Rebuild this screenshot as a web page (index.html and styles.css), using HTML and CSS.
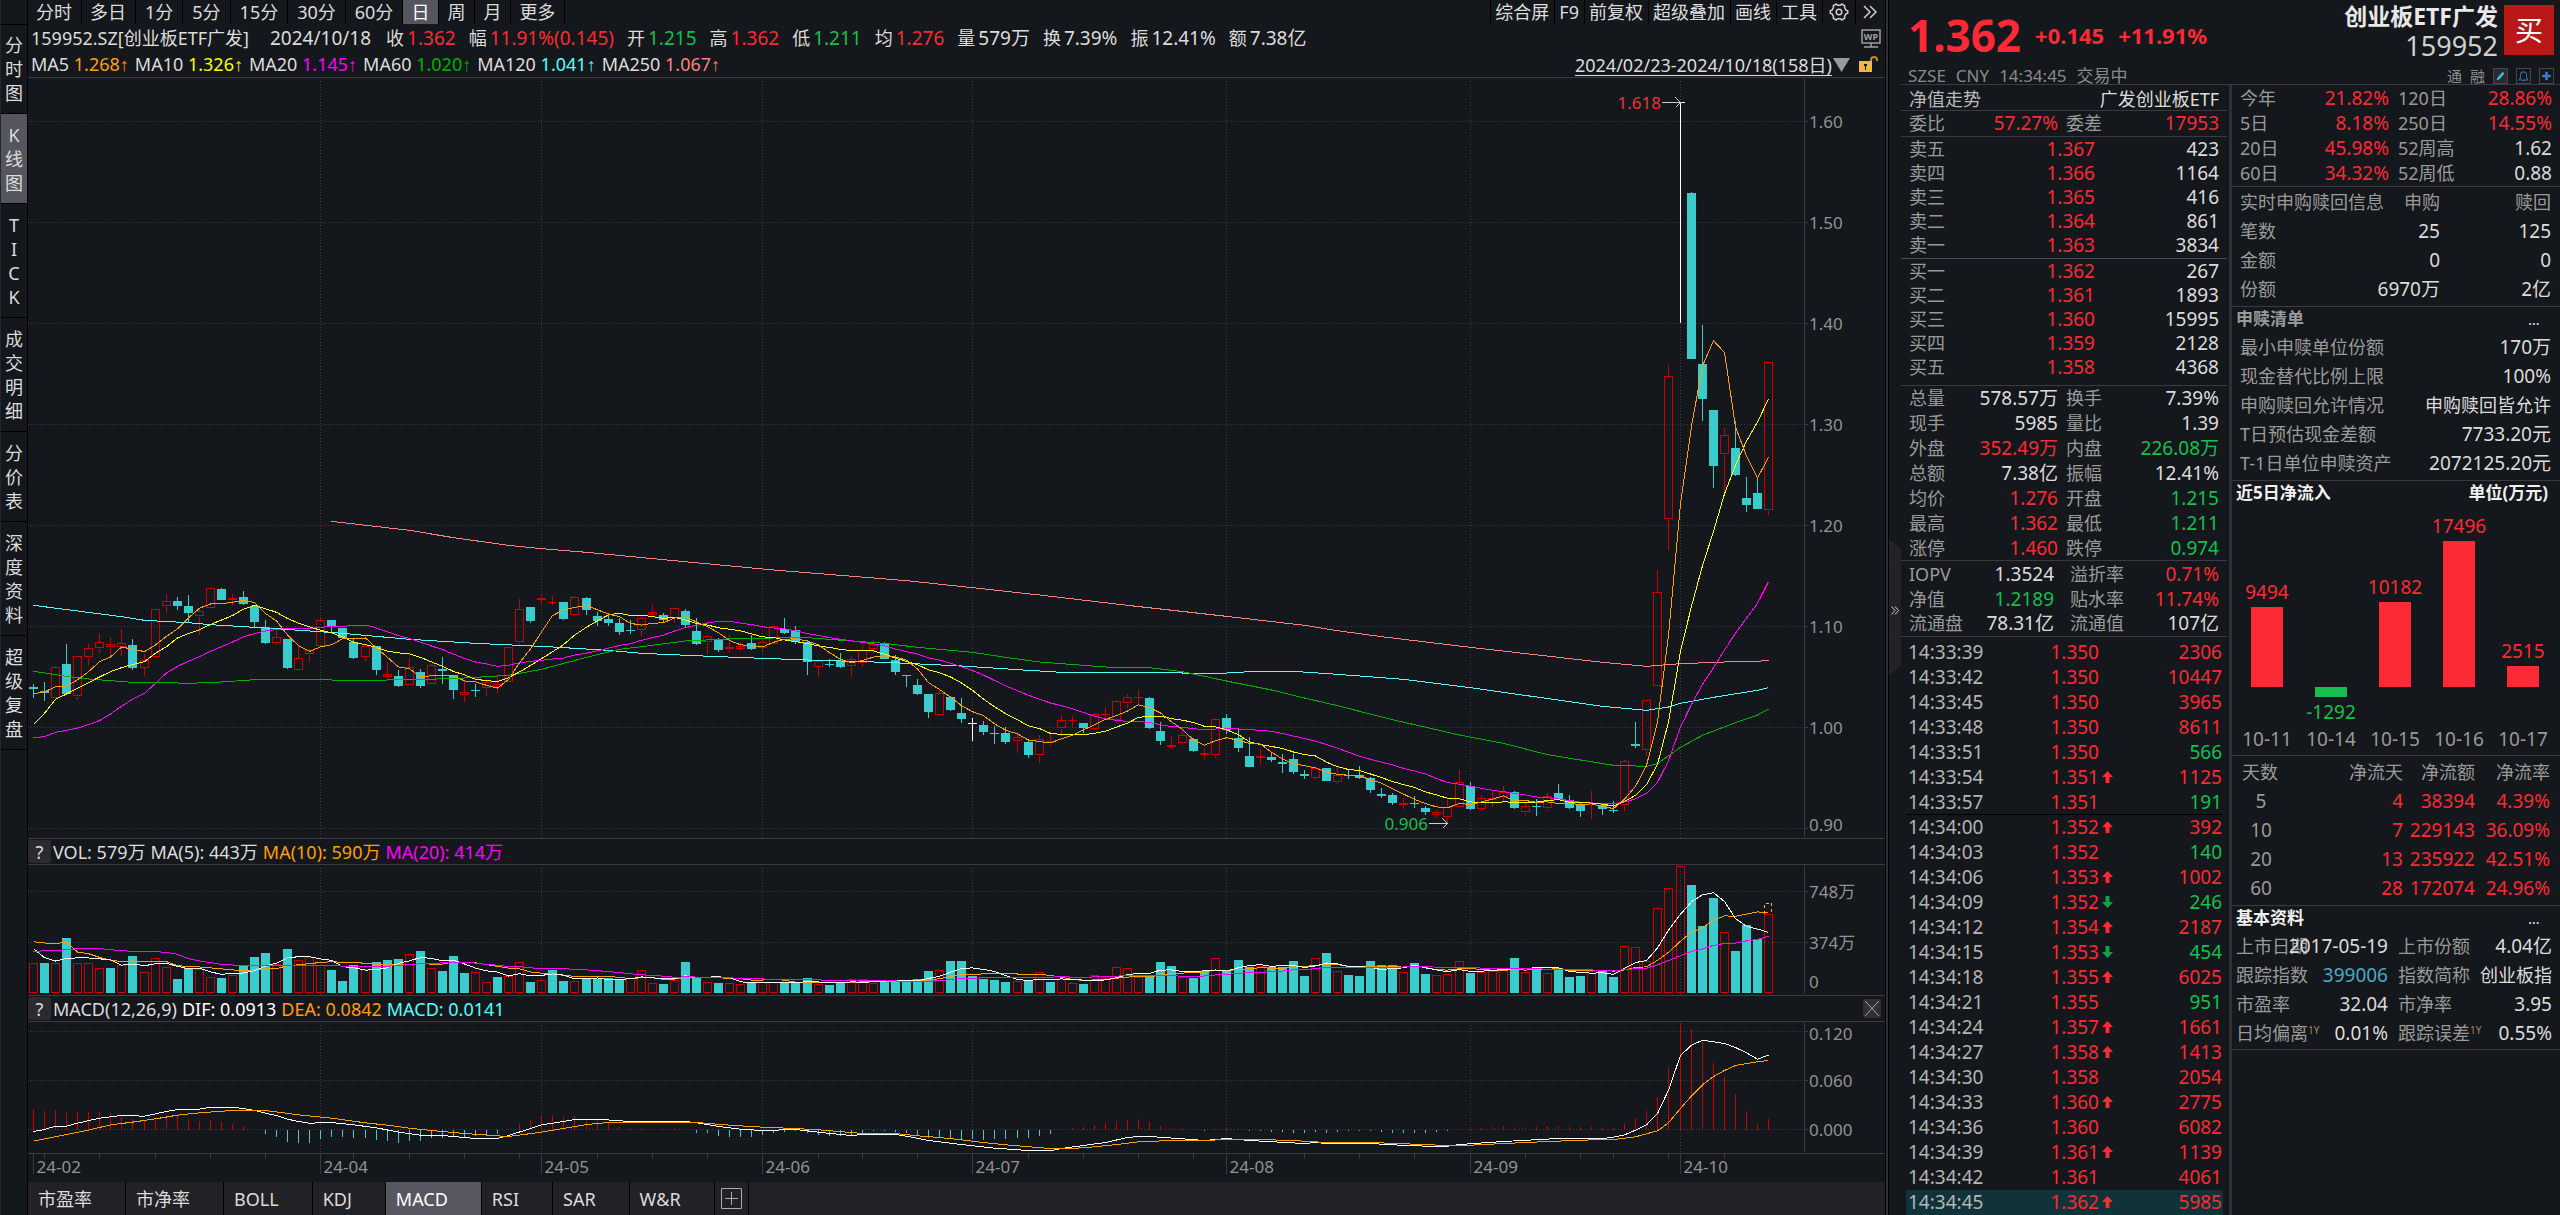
FILE: index.html
```
<!DOCTYPE html>
<html lang="zh-CN">
<head>
<meta charset="utf-8">
<title>159952.SZ 创业板ETF广发</title>
<link rel="stylesheet" href="styles.css">
</head>
<body>
<div class="app">
  <nav class="side">
    <button>分时图</button>
    <button class="on">K线图</button>
    <button>T<br>I<br>C<br>K</button>
    <button>成交明细</button>
    <button>分价表</button>
    <button>深度资料</button>
    <button>超级复盘</button>
  </nav>

  <main class="main">
    <div class="toolbar">
      <div class="periods">
        <button>分时</button><button>多日</button><button class="min">1分</button><button class="min">5分</button><button class="min">15分</button><button class="min">30分</button><button class="min">60分</button><button class="on">日</button><button>周</button><button>月</button><button>更多</button>
      </div>
      <div class="tools">
        <button>综合屏</button><button>F9</button><button>前复权</button><button>超级叠加</button><button>画线</button><button>工具</button>
        <button class="icon" aria-label="设置"><svg width="20" height="20" viewBox="0 0 20 20"><path d="M7.200 2l1.300 1.200h3L12.800 2l3 1.800-.3 1.800 1.500 2.500 1.700.7v2.400l-1.700.7-1.500 2.500.3 1.800-3 1.800-1.300-1.200h-3L7.200 18l-3-1.800.3-1.800L3 11.900l-1.700-.7V8.800L3 8.100l1.500-2.500-.3-1.800z"/><circle cx="10" cy="10" r="2.800"/></svg></button>
        <button class="icon last" aria-label="展开"><svg width="14" height="14" viewBox="0 0 14 14"><path d="M1 1l6 6-6 6M7 1l6 6-6 6"/></svg></button>
      </div>
    </div>

    <div class="info">
      <span class="name">159952.SZ[创业板ETF广发]</span>
      <span class="date">2024/10/18</span>
      <span>收<b class="up">1.362</b></span>
      <span>幅<b class="up">11.91%(0.145)</b></span>
      <span>开<b class="down">1.215</b></span>
      <span>高<b class="up">1.362</b></span>
      <span>低<b class="down">1.211</b></span>
      <span>均<b class="up">1.276</b></span>
      <span>量<b>579万</b></span>
      <span>换<b>7.39%</b></span>
      <span>振<b>12.41%</b></span>
      <span>额<b>7.38亿</b></span>
      <button class="wp" aria-label="WP"><svg width="20" height="19" viewBox="0 0 20 19"><path d="M1 1h18v13H1zM10 14v4M3 18h14" fill="none" stroke="#a0a0a0" stroke-width="1.500"/><text x="10" y="11" text-anchor="middle">WP</text></svg></button>
    </div>
    <div class="legend">
      <span>MA5 <b class="m5">1.268<i>↑</i></b></span>
      <span>MA10 <b class="m10">1.326<i>↑</i></b></span>
      <span>MA20 <b class="m20">1.145<i>↑</i></b></span>
      <span>MA60 <b class="m60">1.020<i>↑</i></b></span>
      <span>MA120 <b class="m120">1.041<i>↑</i></b></span>
      <span>MA250 <b class="m250">1.067<i>↑</i></b></span>
      <a class="range" href="#range">2024/02/23-2024/10/18(158日)</a>
      <svg class="tri" width="17" height="14" viewBox="0 0 17 14"><path d="M0 0h17L8.500 14z" fill="#9a9a9a"/></svg>
      <svg class="lock" width="20" height="17" viewBox="0 0 20 17"><path d="M0 5h13v11H0z" fill="#f2b73c"/><path d="M12 5V4c0-4 6-4 6 0v1" fill="none" stroke="#c48a22" stroke-width="2"/><path d="M5 8h3v2H7v4H6v-4H5z" fill="#14171b"/></svg>
    </div>

    <svg class="pane price" id="price"></svg>

    <div class="panehead">
      <button class="q" aria-label="成交量说明">?</button>
      <span>VOL: 579万</span><span>MA(5): 443万</span><span class="m5">MA(10): 590万</span><span class="m20">MA(20): 414万</span>
    </div>
    <svg class="pane vol" id="vol"></svg>

    <div class="panehead">
      <button class="q" aria-label="MACD说明">?</button>
      <span>MACD(12,26,9)</span><span class="w">DIF: 0.0913</span><span class="m5">DEA: 0.0842</span><span class="m120">MACD: 0.0141</span>
      <button class="close" aria-label="关闭"><svg width="18" height="19" viewBox="0 0 18 19"><path d="M2 2l14 15M16 2L2 17"/></svg></button>
    </div>
    <svg class="pane macd" id="macd"></svg>
    <svg class="dates" id="dates"></svg>

    <div class="tabs">
      <button>市盈率</button><button>市净率</button><button>BOLL</button><button>KDJ</button><button class="on">MACD</button><button>RSI</button><button>SAR</button><button>W&amp;R</button>
      <button class="add" aria-label="添加指标"><svg width="21" height="21" viewBox="0 0 21 21"><path d="M.5.5h20v20H.5zM10.500 4v13M4 10.500h13"/></svg></button>
    </div>
  </main>

  <div class="split"></div>
  <div class="fold">
    <button aria-label="收起"><svg width="8" height="9" viewBox="0 0 8 9"><path d="M.5.5l3.500 4-3.500 4M4 .5l3.500 4L4 8.500"/></svg></button>
  </div>

  <aside class="quote">
    <header class="qhead">
      <div class="last-price">
        <div class="figures"><strong class="up">1.362</strong><b class="up">+0.145</b><b class="up">+11.91%</b></div>
        <div class="venue"><span>SZSE</span><span>CNY</span><span>14:34:45</span><span>交易中</span></div>
      </div>
      <div class="ident">
        <div class="idtop">
          <div class="names"><h1>创业板ETF广发</h1><span>159952</span></div>
          <button class="buy">买</button>
        </div>
        <div class="flags">
          <span>通</span><span>融</span>
          <button class="nb" aria-label="编辑"><svg width="15" height="16" viewBox="0 0 15 16"><path d="M3 13l1-3 6-7 2 2-6 7z" fill="#35c3e0"/></svg></button>
          <button aria-label="提醒"><svg width="15" height="16" viewBox="0 0 15 16"><path d="M2.500 12.500h10L11 10V7c0-5-7-5-7 0v3zM6 13.500h3" fill="none" stroke="#3a68b0" stroke-width="1.200"/></svg></button>
          <button aria-label="加自选"><svg width="15" height="16" viewBox="0 0 15 16"><path d="M6 3h3v3.500h3.500v3H9V13H6V9.500H2.500v-3H6z" fill="#3f74c8"/></svg></button>
        </div>
      </div>
    </header>

    <div class="cols">
      <section class="left">
        <div class="fund"><span>净值走势</span><b>广发创业板ETF</b></div>
        <table class="stats"><colgroup><col class="c1"><col class="c2"><col class="c3"><col class="c4"></colgroup>
          <tr><th>委比</th><td class="up">57.27%</td><th>委差</th><td class="up">17953</td></tr>
        </table>
        <table class="book asks"><colgroup><col class="b1"><col class="b2"><col></colgroup>
          <tr><th>卖五</th><td class="up">1.367</td><td>423</td></tr>
          <tr><th>卖四</th><td class="up">1.366</td><td>1164</td></tr>
          <tr><th>卖三</th><td class="up">1.365</td><td>416</td></tr>
          <tr><th>卖二</th><td class="up">1.364</td><td>861</td></tr>
          <tr><th>卖一</th><td class="up">1.363</td><td>3834</td></tr>
        </table>
        <table class="book bids"><colgroup><col class="b1"><col class="b2"><col></colgroup>
          <tr><th>买一</th><td class="up">1.362</td><td>267</td></tr>
          <tr><th>买二</th><td class="up">1.361</td><td>1893</td></tr>
          <tr><th>买三</th><td class="up">1.360</td><td>15995</td></tr>
          <tr><th>买四</th><td class="up">1.359</td><td>2128</td></tr>
          <tr><th>买五</th><td class="up">1.358</td><td>4368</td></tr>
        </table>
        <table class="stats"><colgroup><col class="c1"><col class="c2"><col class="c3"><col class="c4"></colgroup>
          <tr><th>总量</th><td>578.57万</td><th>换手</th><td>7.39%</td></tr>
          <tr><th>现手</th><td>5985</td><th>量比</th><td>1.39</td></tr>
          <tr><th>外盘</th><td class="up">352.49万</td><th>内盘</th><td class="down">226.08万</td></tr>
          <tr><th>总额</th><td>7.38亿</td><th>振幅</th><td>12.41%</td></tr>
          <tr><th>均价</th><td class="up">1.276</td><th>开盘</th><td class="down">1.215</td></tr>
          <tr><th>最高</th><td class="up">1.362</td><th>最低</th><td class="down">1.211</td></tr>
          <tr><th>涨停</th><td class="up">1.460</td><th>跌停</th><td class="down">0.974</td></tr>
        </table>
        <table class="stats nav"><colgroup><col class="c1"><col class="c2"><col class="c3"><col class="c4"></colgroup>
          <tr><th>IOPV</th><td>1.3524</td><th>溢折率</th><td class="up">0.71%</td></tr>
          <tr><th>净值</th><td class="down">1.2189</td><th>贴水率</th><td class="up">11.74%</td></tr>
          <tr><th>流通盘</th><td>78.31亿</td><th>流通值</th><td>107亿</td></tr>
        </table>
        <table class="ticks"><colgroup><col class="t1"><col class="t2"><col class="t3"><col></colgroup>
          <tr><th>14:33:39</th><td>1.350</td><td></td><td>2306</td></tr>
          <tr><th>14:33:42</th><td>1.350</td><td></td><td>10447</td></tr>
          <tr><th>14:33:45</th><td>1.350</td><td></td><td>3965</td></tr>
          <tr><th>14:33:48</th><td>1.350</td><td></td><td>8611</td></tr>
          <tr><th>14:33:51</th><td>1.350</td><td></td><td class="down">566</td></tr>
          <tr><th>14:33:54</th><td>1.351</td><td><i class="au"></i></td><td>1125</td></tr>
          <tr class="minute"><th>14:33:57</th><td>1.351</td><td></td><td class="down">191</td></tr>
          <tr><th>14:34:00</th><td>1.352</td><td><i class="au"></i></td><td>392</td></tr>
          <tr><th>14:34:03</th><td>1.352</td><td></td><td class="down">140</td></tr>
          <tr><th>14:34:06</th><td>1.353</td><td><i class="au"></i></td><td>1002</td></tr>
          <tr><th>14:34:09</th><td>1.352</td><td><i class="ad"></i></td><td class="down">246</td></tr>
          <tr><th>14:34:12</th><td>1.354</td><td><i class="au"></i></td><td>2187</td></tr>
          <tr><th>14:34:15</th><td>1.353</td><td><i class="ad"></i></td><td class="down">454</td></tr>
          <tr><th>14:34:18</th><td>1.355</td><td><i class="au"></i></td><td>6025</td></tr>
          <tr><th>14:34:21</th><td>1.355</td><td></td><td class="down">951</td></tr>
          <tr><th>14:34:24</th><td>1.357</td><td><i class="au"></i></td><td>1661</td></tr>
          <tr><th>14:34:27</th><td>1.358</td><td><i class="au"></i></td><td>1413</td></tr>
          <tr><th>14:34:30</th><td>1.358</td><td></td><td>2054</td></tr>
          <tr><th>14:34:33</th><td>1.360</td><td><i class="au"></i></td><td>2775</td></tr>
          <tr><th>14:34:36</th><td>1.360</td><td></td><td>6082</td></tr>
          <tr><th>14:34:39</th><td>1.361</td><td><i class="au"></i></td><td>1139</td></tr>
          <tr><th>14:34:42</th><td>1.361</td><td></td><td>4061</td></tr>
          <tr class="now"><th>14:34:45</th><td>1.362</td><td><i class="au"></i></td><td>5985</td></tr>
        </table>
      </section>

      <section class="right">
        <div class="pairs perf">
          <div><span>今年</span><b class="up">21.82%</b></div><div><span>120日</span><b class="up">28.86%</b></div>
          <div><span>5日</span><b class="up">8.18%</b></div><div><span>250日</span><b class="up">14.55%</b></div>
          <div><span>20日</span><b class="up">45.98%</b></div><div><span>52周高</span><b>1.62</b></div>
          <div><span>60日</span><b class="up">34.32%</b></div><div><span>52周低</span><b>0.88</b></div>
        </div>
        <table class="subs"><colgroup><col class="s1"><col class="s2"><col></colgroup>
          <tr><th>实时申购赎回信息</th><th class="r">申购</th><th class="r">赎回</th></tr>
          <tr><th>笔数</th><td>25</td><td>125</td></tr>
          <tr><th>金额</th><td>0</td><td>0</td></tr>
          <tr><th>份额</th><td>6970万</td><td>2亿</td></tr>
        </table>
        <div class="block list">
          <h2><span>申赎清单</span><button class="more" aria-label="更多清单">...</button></h2>
          <div><span>最小申赎单位份额</span><b>170万</b></div>
          <div><span>现金替代比例上限</span><b>100%</b></div>
          <div><span>申购赎回允许情况</span><b class="cn">申购赎回皆允许</b></div>
          <div><span>T日预估现金差额</span><b>7733.20元</b></div>
          <div><span>T-1日单位申赎资产</span><b>2072125.20元</b></div>
        </div>
        <div class="block flow">
          <h2><span>近5日净流入</span><span>单位(万元)</span></h2>
          <div class="bars">
            <div><p class="pos"><b>9494</b><i style="height:80px"></i></p><p class="neg"></p><span>10-11</span></div>
            <div><p class="pos"></p><p class="neg"><i style="height:10px"></i><b>-1292</b></p><span>10-14</span></div>
            <div><p class="pos"><b>10182</b><i style="height:85px"></i></p><p class="neg"></p><span>10-15</span></div>
            <div><p class="pos"><b>17496</b><i style="height:146px"></i></p><p class="neg"></p><span>10-16</span></div>
            <div><p class="pos"><b>2515</b><i style="height:21px"></i></p><p class="neg"></p><span>10-17</span></div>
          </div>
        </div>
        <table class="net"><colgroup><col class="n1"><col class="n2"><col class="n3"><col></colgroup>
          <tr><th>天数</th><th class="r">净流天</th><th class="r">净流额</th><th class="r">净流率</th></tr>
          <tr><th class="d">5</th><td>4</td><td>38394</td><td>4.39%</td></tr>
          <tr><th class="d">10</th><td>7</td><td>229143</td><td>36.09%</td></tr>
          <tr><th class="d">20</th><td>13</td><td>235922</td><td>42.51%</td></tr>
          <tr><th class="d">60</th><td>28</td><td>172074</td><td>24.96%</td></tr>
        </table>
        <div class="block base">
          <h2><span>基本资料</span><button class="more" aria-label="更多资料">...</button></h2>
          <div class="pairs">
            <div><span>上市日期</span><b>2017-05-19</b></div><div><span>上市份额</span><b>4.04亿</b></div>
            <div><span>跟踪指数</span><a href="#399006">399006</a></div><div><span>指数简称</span><b class="cn">创业板指</b></div>
            <div><span>市盈率</span><b>32.04</b></div><div><span>市净率</span><b>3.95</b></div>
            <div><span>日均偏离<sup>1Y</sup></span><b>0.01%</b></div><div><span>跟踪误差<sup>1Y</sup></span><b>0.55%</b></div>
          </div>
        </div>
      </section>
    </div>
  </aside>
</div>
<script src="chart.js"></script>
</body>
</html>
```
FILE: styles.css
```
* { box-sizing: border-box; }
body {
  margin: 0;
  background: #14171b;
  color: #dcdcdc;
  font: 18px/24px "Noto Sans", "Noto Sans CJK SC", sans-serif;
}
button {
  margin: 0; padding: 0; border: 0; background: none;
  color: inherit; font: inherit; white-space: nowrap;
}
b { font-weight: 400; }
a { color: inherit; }
.up { color: #fb2a34; }
.down { color: #16bf50; }
.m5 { color: #ff9f00; }
.m10 { color: #ffff00; }
.m20 { color: #ff00ff; }
.m60 { color: #00b000; }
.m120 { color: #54ffff; }
.m250 { color: #ff8080; }
.w { color: #fff; }

.app { display: flex; min-height: 100vh; }

/* left rail */
.side {
  flex: none; width: 28px; padding-top: 24px;
  border-left: 1px solid #24262b; border-right: 1px solid #000;
  display: flex; flex-direction: column;
}
.side button {
  width: 26px; padding: 9px 3px 8px;
  border-bottom: 1px solid #000;
  line-height: 24px; white-space: normal; word-break: break-all; text-align: center;
}
.side button:first-child { border-top: 1px solid #000; padding-top: 8px; }
.side .on { background: #555560; }

/* chart column */
.main { flex: 1; min-width: 0; display: flex; flex-direction: column; }
.toolbar { display: flex; justify-content: space-between; height: 24px; }
.periods, .tools { display: flex; }
.periods button { padding: 0 9px 0 8px; border-right: 1px solid #000; }
.periods .min { padding: 0 9px; }
.periods .on { background: #555560; color: #fff; }
.tools button { padding: 0 5px 0 4px; border-left: 1px solid #000; }
.tools .icon { width: 33px; display: flex; align-items: center; justify-content: center; }
.tools .last { width: 30px; }
.tools svg { fill: none; stroke: #d0d0d0; stroke-width: 1.5; }

.info {
  display: flex; align-items: center; gap: 13px;
  height: 28px; padding: 0 4px 0 3px; white-space: nowrap;
}
.info b { font-size: 19px; margin-left: 3px; }
.info .date { font-size: 19px; margin: 0 2px 0 8px; }
.wp { margin-left: auto; display: flex; }
.wp text { font: 700 9px "Noto Sans", sans-serif; fill: #a0a0a0; }
.legend {
  display: flex; align-items: center; gap: 6px;
  height: 26px; padding: 0 6px 0 3px;
  border-bottom: 1px solid #3b3b3f; white-space: nowrap;
}
.legend i { font-family: "Liberation Sans", sans-serif; font-style: normal; }
.legend .range { margin-left: auto; text-underline-offset: 3px; }
.legend .tri { margin-left: -5px; }
.legend .lock { margin-left: 3px; }

.pane { display: block; width: 100%; min-height: 60px; height: 0; }
.price { flex: 760 1 0; }
.vol { flex: 130 1 0; }
.macd { flex: 131 1 0; }
.dates { display: block; width: 100%; height: 29px; }
.pane text, .dates text { font-size: 17px; fill: #929292; }
.pane text.up { fill: #fb2a34; }
.pane text.down { fill: #16bf50; }
.panehead {
  display: flex; align-items: center; gap: 5px;
  height: 27px; padding-right: 4px;
  border-top: 1px solid #3b3b3f; border-bottom: 1px solid #3b3b3f;
  white-space: nowrap;
}
.q { width: 23px; height: 23px; line-height: 22px; background: #2a2a30; border-radius: 3px; margin-right: -3px; }
.close { margin-left: auto; width: 18px; height: 19px; background: #2f2f34; border-radius: 2px; display: flex; }
.close path { stroke: #aaa; }

.tabs { display: flex; height: 33px; background: #212126; }
.tabs button { padding: 0 33px 0 10px; border-right: 1px solid #000; line-height: 32px; }
.tabs .on { background: #575762; color: #fff; }
.tabs .add { width: 34px; padding: 0; display: flex; align-items: center; justify-content: center; }
.tabs path { fill: none; stroke: #aaa; }

/* divider and fold handle */
.split { flex: none; width: 3px; background: #332f35; border-left: 1px solid #000; }
.fold { flex: none; width: 13px; border-left: 1px solid #000; display: flex; align-items: center; }
.fold button {
  width: 12px; height: 136px; background: #232227;
  clip-path: polygon(0 0, 100% 7%, 100% 93%, 0 100%);
}
.fold path { fill: none; stroke: #ccc; }

/* quote panel */
.quote { flex: none; width: 659px; display: flex; flex-direction: column; }
.qhead {
  display: flex; justify-content: space-between; height: 85px;
  border-bottom: 1px solid #3b3b3f; padding: 0 6px 0 7px;
}
.figures { display: flex; align-items: center; gap: 14px; height: 66px; padding-top: 4px; }
.figures strong { font-size: 44px; font-weight: 700; }
.figures b { font-size: 22px; font-weight: 700; }
.venue { display: flex; gap: 10px; height: 18px; line-height: 19px; color: #8a8a8a; font-size: 17px; }
.idtop { display: flex; gap: 6px; padding-top: 5px; }
.names { text-align: right; margin-top: -3px; }
.names h1 { margin: 0; font-size: 23px; line-height: 28px; font-weight: 700; color: #e8e8e8; }
.names span { display: block; font-size: 27px; line-height: 32px; color: #cfcfcf; }
.buy { width: 50px; height: 50px; background: #b81818; color: #fff; font-size: 28px; line-height: 50px; }
.flags { display: flex; justify-content: flex-end; align-items: center; gap: 8px; height: 16px; margin-top: 6px; font-size: 15px; line-height: 16px; color: #8f8f8f; }
.flags button { width: 15px; height: 16px; border: 1px solid #45454b; display: flex; align-items: center; justify-content: center; }
.flags .nb { background: #2b2c31; }

.cols { flex: 1; display: flex; }
.left { width: 326px; }
.right { flex: 1; margin-left: 2px; border-left: 3px solid #332f35; }
table { width: 100%; border-collapse: collapse; table-layout: fixed; white-space: nowrap; }
td, th { padding: 0; font-weight: 400; vertical-align: middle; }
th { text-align: left; color: #9a9a9a; }
td { text-align: right; font-size: 19px; }
th.r { text-align: right; }

.fund { display: flex; justify-content: space-between; height: 26px; padding: 2px 8px 0; border-bottom: 1px solid #3b3b3f; color: #b8b8b8; }
.fund b { color: #dcdcdc; }
.stats { border-bottom: 1px solid #3b3b3f; }
.stats td, .stats th { height: 25px; line-height: 24px; }
.stats th:first-child { padding-left: 8px; }
.stats th:nth-child(3) { padding-left: 8px; }
.stats td:last-child { padding-right: 8px; }
.stats.nav td:nth-child(2) { padding-right: 4px; }
.stats.nav th:nth-child(3) { padding-left: 12px; }
.c1 { width: 50px; } .c2 { width: 107px; } .c3 { width: 62px; } .c4 { width: 107px; }
.book td, .book th { height: 24px; line-height: 24px; }
.book th { padding-left: 8px; }
.book td:last-child { padding-right: 8px; }
.b1 { width: 60px; } .b2 { width: 134px; }
.book { border-collapse: separate; border-spacing: 0; border-bottom: 1px solid #4a4a58; }
.asks { padding-bottom: 1px; }
.bids { padding-bottom: 6px; border-bottom-color: #3b3b3f; }
.ticks { width: 317px; margin: 3px 4px 0 5px; }
.ticks td, .ticks th { height: 25px; line-height: 24px; font-size: 19px; color: #fb2a34; }
.ticks th { color: #b4b4b4; padding-left: 2px; }
.ticks td:last-child { padding-right: 1px; }
.ticks td.down { color: #16bf50; }
.ticks .minute td, .ticks .minute th { border-bottom: 1px solid #000; }
.ticks .now { background: #0f3338; }
.t1 { width: 90px; } .t2 { width: 103px; } .t3 { width: 14px; }
.au, .ad { display: block; width: 11px; height: 12px; margin-left: 3px; background: #fb2a34; clip-path: polygon(50% 0, 100% 50%, 68% 50%, 68% 100%, 32% 100%, 32% 50%, 0 50%); }
.ad { background: #16a048; transform: rotate(180deg); }

.right > * { border-bottom: 1px solid #3b3b3f; }
.pairs { display: grid; grid-template-columns: 157px 1fr; column-gap: 9px; }
.pairs > div, .list > div { display: flex; white-space: nowrap; }
.pairs span, .list span { flex: 1 1 0; min-width: 0; color: #9a9a9a; }
.pairs b, .pairs a, .list b { font-size: 19px; text-decoration: none; }
.list .cn, .pairs .cn { font-size: 18px; }
.pairs a { color: #4aa9c4; }
.perf { padding: 1px 8px 0; grid-template-columns: 149px 1fr; }
.perf > div { height: 25px; line-height: 25px; }
.subs { border-collapse: separate; border-spacing: 0; padding: 0 9px 3px 8px; }
.subs td, .subs th, .net td, .net th { height: 29px; line-height: 24px; }
.s1 { width: 130px; } .s2 { width: 70px; }
.block h2 {
  display: flex; justify-content: space-between; margin: 0; height: 26px;
  padding: 0 12px 0 4px; font-size: 17px; font-weight: 700; line-height: 24px; color: #f0f0f0;
}
.more { width: 28px; line-height: 14px; font-size: 14px; font-weight: 400; }
.list { padding-bottom: 2px; }
.list > div { height: 29px; line-height: 28px; padding: 0 9px 0 8px; }
.bars { display: grid; grid-template-columns: repeat(5, 64px); padding-left: 3px; }
.bars p { margin: 0; display: flex; flex-direction: column; align-items: center; }
.bars .pos { height: 180px; justify-content: flex-end; color: #fb2a34; }
.bars .neg { height: 40px; color: #16bf50; }
.bars b { font-size: 19px; line-height: 30px; }
.bars i { width: 32px; background: currentColor; }
.bars > div > span { display: block; height: 28px; line-height: 24px; text-align: center; font-size: 19px; color: #9a9a9a; }
.net { border-collapse: separate; border-spacing: 0; padding: 1px 10px 3px; }
.net td { color: #fb2a34; }
.net .d { padding-right: 4px; text-align: center; font-size: 19px; }
.n1 { width: 42px; } .n2 { width: 119px; } .n3 { width: 72px; }
.base .pairs { padding: 0 8px 1px 4px; grid-template-columns: 152px 1fr; column-gap: 10px; }
.base .pairs > div { height: 29px; line-height: 28px; }
sup { font-size: 10px; line-height: 10px; vertical-align: 6px; color: #a8865a; }
```
FILE: chart.js
```
// Daily bars: [kind, high, bodyTop, bodyBottom, low]; r = rising, c = falling, w = flat.
// Prices are steps below 1.3245, 3030 steps to one yuan.
const bars = `
c 852 861 867 893|c 846 873 879 903|r 798 801 893 893|c 732 792 882 882|r 769 769 890 899|r 732 745 773 797|r 702 727 746 759|r 711 733 743 768|r 687 730 743 768|c 717 735 804 810
r 762 780 803 827|r 627 627 770 770|r 582 604 620 639|c 591 603 618 630|c 585 618 639 667|r 627 634 650 705|r 561 565 626 626|c 564 567 600 600|r 582 595 601 617|c 573 591 612 615
c 618 618 666 682|c 660 682 729 732|r 687 712 731 735|c 717 717 804 807|r 738 775 812 812|r 747 751 764 786|r 652 661 738 738|c 660 660 681 700|c 684 684 715 715|c 714 725 774 777
r 739 739 773 786|c 738 738 810 825|r 786 823 833 840|c 810 828 858 861|r 774 802 857 857|c 807 816 858 864|r 793 796 854 854|c 771 807 813 852|c 825 825 870 897|r 844 877 887 906
c 852 870 873 891|r 840 847 866 888|r 824 853 862 879|r 738 742 848 848|r 597 628 728 735|c 621 621 663 669|r 579 595 599 612|r 588 606 609 614|c 606 606 657 660|r 588 592 647 647
c 591 594 630 645|c 636 648 663 678|c 639 657 669 678|c 654 669 696 705|c 661 690 693 702|r 651 655 692 708|r 615 637 647 647|c 639 645 660 669|r 621 625 654 669|c 627 633 675 681
c 654 693 732 735|r 705 709 728 762|c 714 719 750 756|r 705 742 749 759|r 727 739 749 753|c 706 729 747 750|r 720 727 746 760|r 675 679 734 734|c 654 687 699 702|c 678 690 727 732
c 720 725 786 825|r 776 782 800 831|c 777 792 795 801|c 759 784 801 804|r 768 778 800 831|r 738 751 791 801|r 720 731 746 758|c 726 729 777 777|c 765 780 816 825|c 825 825 828 861
c 837 855 882 885|c 882 882 936 954|r 868 880 947 947|c 891 891 930 933|c 894 939 957 969|w 954 969 972 1023|c 963 975 996 1005|c 978 999 1002 1032|c 981 999 1026 1032|r 1002 1012 1025 1059
c 1023 1026 1065 1074|r 1005 1018 1067 1089|r 993 1024 1031 1038|r 945 961 986 1008|r 948 961 964 984|c 969 969 984 999|r 939 943 987 990|r 921 942 945 960|r 900 904 960 969|r 882 892 911 924
r 870 891 894 912|c 891 894 984 987|c 966 993 1023 1035|r 1008 1036 1043 1047|r 987 1006 1031 1035|c 1014 1017 1053 1056|r 1047 1059 1065 1077|r 954 958 1067 1074|c 942 954 990 1002|c 984 1014 1044 1056
c 1011 1068 1101 1101|r 1047 1068 1073 1095|c 1056 1071 1080 1086|c 1062 1086 1092 1119|c 1062 1077 1116 1122|c 1110 1122 1128 1137|r 1101 1103 1133 1137|c 1104 1104 1143 1143|r 1101 1126 1148 1152|c 1110 1125 1128 1137
c 1098 1126 1134 1137|c 1131 1134 1170 1179|c 1164 1182 1188 1194|c 1179 1185 1209 1215|r 1194 1210 1215 1227|c 1188 1209 1212 1224|c 1218 1224 1236 1245|r 1230 1236 1244 1254|r 1200 1222 1253 1268|r 1110 1147 1223 1223
c 1146 1158 1227 1230|r 1185 1195 1229 1232|r 1170 1195 1202 1220|r 1158 1175 1190 1202|c 1173 1176 1224 1227|r 1205 1219 1238 1244|c 1197 1218 1221 1248|r 1179 1189 1226 1232|c 1152 1179 1200 1200|c 1185 1200 1224 1227
c 1210 1215 1233 1251|r 1173 1212 1215 1256|c 1212 1215 1227 1245|c 1203 1230 1233 1239|r 1080 1084 1217 1232|c 966 1032 1038 1044|r 901 901 1052 1068|r 510 577 860 860|r -105 -71 359 450|w -894 -894 -891 -231
c -623 -621 -123 -123|c -225 -108 -3 63|c 30 30 198 264|r 84 106 164 273|c 63 144 225 228|c 231 294 315 336|c 235 279 327 327|r -113 -113 332 344
`.trim().split(/[|\n]/).map(s => { const [k, ...v] = s.split(' '); return [k, ...v.map(Number)]; });

// Volume; negative marks a down day.
const volume = [91,-89,91,-164,91,91,76,-74,85,-110,64,106,79,-41,-75,72,49,-44,54,-81,-107,-119,88,-131,100,107,85,-68,-35,-83,72,-92,-98,-101,118,-125,76,-65,-110,-59,64,34,-47,51,94,-32,40,-68,-35,37,-42,-43,-44,-40,44,70,31,-26,40,-92,-47,34,-29,31,28,-30,33,34,-29,-30,-44,28,-23,-30,41,41,31,-36,-36,-39,-42,-66,68,-96,-96,-51,-42,-39,-33,37,-36,62,-33,43,29,-27,53,44,77,74,48,-51,-93,-81,49,-45,-66,104,-65,-99,-78,80,-77,-79,-96,-51,104,-120,65,-54,-51,-96,-84,-84,62,-90,-57,54,56,95,-60,62,65,71,-105,62,-78,59,-74,-48,-51,65,-66,-48,140,137,97,254,314,380,-324,-201,-285,182,-126,-204,-162,236];

const hist = [62,56,59,50,53,53,52,50,42,33,26,32,38,40,32,26,29,23,17,11,0,-12,-21,-37,-39,-39,-27,-21,-21,-26,-24,-30,-33,-39,-33,-33,-26,-24,-23,-22,-20,-17,-12,2,20,28,41,44,38,41,27,26,19,8,1,2,3,2,4,-1,-9,-11,-18,-21,-21,-21,-17,-9,-6,-3,-10,-15,-18,-18,-18,-12,-4,-4,-7,-11,-18,-25,-25,-27,-29,-29,-31,-29,-29,-25,-25,-19,-14,-1,4,7,13,19,25,28,31,22,10,4,1,-1,-5,2,4,1,-4,-4,-7,-7,-10,-10,-7,-10,-7,-4,-4,-4,-7,-10,-10,-10,-10,-6,-4,1,1,4,7,10,7,7,7,10,10,7,7,7,7,4,19,34,55,98,188,320,302,263,200,158,107,56,17,32];

// Long averages and MACD curves as [bar, value, bar, value, ...].
const ma60 = [0,814,3,829,5,837,9,847,12,848,14,850,17,846,20,839,26,839,28,841,32,840,38,836,43,826,46,808,50,772,53,748,55,740,59,723,64,715,70,713,74,723,77,730,80,742,85,757,88,772,91,786,97,801,101,803,104,815,108,843,112,870,115,894,118,917,123,959,129,1005,133,1030,137,1064,143,1096,146,1099,147,1091,149,1042,151,1006,154,968,156,945,157,927];
const ma120 = [0,616,4,633,8,650,10,661,14,668,16,674,22,686,28,700,34,718,40,730,46,739,52,751,55,760,62,770,70,780,77,787,84,798,90,811,93,817,99,818,104,819,107,821,110,815,114,814,118,823,120,828,124,838,130,863,136,891,142,919,146,931,148,921,149,910,152,892,156,871,157,863];
const ma250 = [27,364,34,391,38,413,43,436,46,446,50,457,57,479,67,510,73,526,79,542,85,563,91,585,99,616,108,649,115,676,118,692,122,710,130,742,138,772,142,787,146,799,149,791,153,786,156,784,157,781];
const dif = [0,-6,1,0,2,10,3,10,4,19,6,34,8,42,10,40,12,54,13,60,15,61,16,67,18,67,19,63,20,57,21,49,22,42,23,31,24,24,25,19,27,21,29,14,31,5,33,-8,35,-17,37,-18,39,-24,40,-27,42,-27,43,-18,45,3,46,14,48,24,49,30,51,31,54,24,56,25,59,24,60,20,62,9,64,1,66,-3,69,0,71,-8,73,-15,74,-18,75,-15,78,-15,79,-20,81,-33,84,-45,87,-56,90,-63,92,-64,93,-57,95,-48,97,-39,99,-24,100,-21,101,-21,104,-28,106,-33,108,-27,110,-33,115,-42,116,-39,117,-42,121,-42,123,-46,126,-50,128,-50,129,-45,133,-36,138,-27,142,-27,143,-23,144,-16,145,-2,146,14,147,48,148,118,149,222,150,253,151,268,153,258,154,246,155,230,156,211,157,223];
const dea = [0,-35,3,-15,5,-2,7,14,9,22,11,32,13,43,15,50,18,57,21,57,24,44,27,34,30,20,32,13,34,4,36,-3,39,-12,42,-19,43,-21,46,-8,48,3,50,15,52,21,60,21,63,13,66,7,69,3,71,-1,74,-9,75,-12,78,-12,80,-19,82,-24,84,-31,86,-39,88,-46,92,-57,94,-57,96,-52,98,-45,100,-37,103,-33,106,-33,108,-30,112,-31,115,-35,117,-39,121,-39,125,-44,128,-48,130,-47,135,-39,140,-32,143,-30,145,-22,147,-4,148,20,149,63,150,101,151,134,152,159,153,177,154,192,156,203,157,207];

const months = [[0,'24-02'],[26,'24-04'],[46,'24-05'],[66,'24-06'],[85,'24-07'],[108,'24-08'],[130,'24-09'],[149,'24-10']];
const weeks = [1,6,11,16,21,29,34,39,44,51,56,61,71,75,80,90,95,100,105,110,115,120,125,135,140,143,148,153];
const RED = '#cc0000', CYAN = '#3acccd', GRID = '#3c3e42', AXIS = '#3b3b3f';
const AXIS_W = 81;

const average = (values, n, head) => values.map((_, i) =>
  i < head.length ? head[i] : values.slice(i - n + 1, i + 1).reduce((a, b) => a + b) / n);
const closes = bars.map(b => b[0] === 'r' ? b[2] : b[3]);
const vols = volume.map(Math.abs);

const avg5 = average(closes, 5, [881,876,860,858]);
const avg10 = average(closes, 10, [973,940,898,882,865,848,831,815,803]);
const avg20 = average(closes, 20, [1013,1010,997,991,984,974,962,942,919,898,880,850,819,799,784,770,754,740,726]);
const vol5 = average(vols, 5, [133,106,96,104]);
const vol10 = average(vols, 10, [154,150,148,153,123,118,107,99,94]);
const vol20 = average(vols, 20, [124,127,127,130,133,133,133,130,127,125,124,124,122,116,103,96,91,86,84]);

const rect = (x, y, w, h, fill, stroke = 'none') =>
  `<rect x="${x}" y="${y}" width="${w}" height="${h}" fill="${fill}" stroke="${stroke}"/>`;
const line = (x1, y1, x2, y2, c, dash = '') =>
  `<line x1="${x1}" y1="${y1}" x2="${x2}" y2="${y2}" stroke="${c}" ${dash && `stroke-dasharray="${dash}"`}/>`;
const label = (x, y, t, cls = '') => `<text x="${x}" y="${y}" class="${cls}">${t}</text>`;
const curve = (pts, c) => `<polyline points="${pts.join(' ')}" fill="none" stroke="${c}"/>`;

function frame(id) {
  const svg = document.getElementById(id);
  const w = svg.clientWidth, h = svg.clientHeight, plot = w - AXIS_W;
  const step = (plot - 30) / 158;
  return { svg, w, h, plot, x: i => Math.round(5 + i * step) + 0.5 };
}
const each = (f, values, y) => values.map((v, i) => `${f.x(i)},${y(v)}`);
const sparse = (f, a, y) => {
  const out = [];
  for (let i = 0; i < a.length; i += 2) out.push(`${f.x(a[i])},${y(a[i + 1])}`);
  return out;
};
function grid(f, levels) {
  let s = months.slice(1).map(([i]) => line(f.x(i), 3, f.x(i), f.h, GRID, '1 2')).join('');
  levels.forEach(([y, t, ty]) => {
    if (y !== null) s += line(0, y, f.plot, y, GRID, '1 2') + line(f.plot, y, f.plot + 4, y, AXIS);
    s += label(f.plot + 5, (ty ?? y) + 6, t);
  });
  return s + line(f.plot + 0.5, 0, f.plot + 0.5, f.h - 1, AXIS);
}
const put = (f, s) => { f.svg.innerHTML = `<g shape-rendering="crispEdges">${s}</g>`; };

function drawPrice() {
  const f = frame('price'), k = f.h / 760;
  const y = v => (322 + v / 3) * k;
  let s = grid(f, [1.6,1.5,1.4,1.3,1.2,1.1,1].map(p => [Math.floor(y((1.3245 - p) * 3030)) + 0.5, p.toFixed(2)])
    .concat([[Math.floor(y(1286)) + 0.5, '0.90', y(1275)]]));
  bars.forEach(([kind, hi, top, bot, lo], i) => {
    const x = f.x(i), c = kind === 'r' ? RED : kind === 'c' ? CYAN : '#fff';
    const h = Math.max(1, y(bot) - y(top));
    s += line(x, y(hi), x, y(top), c) + line(x, y(bot), x, y(lo), c);
    s += kind === 'r' && h > 1.5
      ? rect(x - 4, Math.round(y(top)) + 0.5, 8, Math.max(1, Math.round(h) - 1), 'none', c)
      : rect(x - 4.5, y(top), 9, h, c);
  });
  s += curve(sparse(f, ma250, y), '#ff8080') + curve(sparse(f, ma120, y), '#54ffff') + curve(sparse(f, ma60, y), '#00b000')
    + curve(each(f, avg20, y), '#ff00ff') + curve(each(f, avg10, y), '#ffff00') + curve(each(f, avg5, y), '#ff9f00');
  const arrow = (x, yy) => line(x - 19, yy, x, yy, '#ccc') + curve([`${x - 5},${yy - 5}`, `${x},${yy}`, `${x - 5},${yy + 5}`], '#ccc');
  const hx = f.x(149), lx = f.x(128), hy = Math.floor(y(-893)) + 0.5, ly = Math.floor(y(1271)) + 0.5;
  s += arrow(hx, hy) + label(hx - 63, hy + 6, '1.618', 'up') + arrow(lx, ly) + label(lx - 63, ly + 6, '0.906', 'down');
  put(f, s);
}

function drawVolume() {
  const f = frame('vol'), k = f.h / 130, base = 128 * k;
  const y = v => base - v / 3 * k;
  let s = grid(f, [[Math.floor(y(304)) + 0.5, '748万'], [Math.floor(y(152)) + 0.5, '374万'], [null, '0', y(33)]]);
  volume.forEach((v, i) => {
    const x = f.x(i), h = Math.round(Math.abs(v) / 3 * k);
    s += v > 0 ? rect(x - 4, base - h + 0.5, 8, h - 1, 'none', RED) : rect(x - 4.5, base - h, 9, h, CYAN);
  });
  const x = f.x(157);
  s += `<path d="M${x - 4} ${y(236)}V${y(269)}h7V${y(236)}" fill="none" stroke="#f2b73c" stroke-dasharray="3 3"/>`;
  s += curve(each(f, vol10, y), '#ff9f00') + curve(each(f, vol5, y), '#fff') + curve(each(f, vol20, y), '#ff00ff');
  put(f, s);
}

function drawMacd() {
  const f = frame('macd'), k = f.h / 131, zero = Math.floor(107 * k) + 0.5;
  const y = v => zero - v / 3 * k;
  let s = grid(f, [[Math.floor(y(294)) + 0.5, '0.120', y(288)], [Math.floor(y(147)) + 0.5, '0.060'], [zero, '0.000']]);
  hist.forEach((v, i) => { s += line(f.x(i), zero, f.x(i), y(v), v > 0 ? RED : CYAN); });
  s += curve(sparse(f, dif, y), '#fff') + curve(sparse(f, dea, y), '#ff9f00');
  put(f, s);
}

function drawDates() {
  const f = frame('dates');
  let s = line(0, 0.5, f.w, 0.5, AXIS);
  weeks.forEach(i => { s += line(f.x(i), 0, f.x(i), 6, AXIS); });
  months.forEach(([i, t]) => { s += line(f.x(i), 0, f.x(i), 21, AXIS) + label(f.x(i) + 3, 20, t); });
  put(f, s);
}

function draw() { drawPrice(); drawVolume(); drawMacd(); drawDates(); }
draw();
window.addEventListener('resize', draw);
```
